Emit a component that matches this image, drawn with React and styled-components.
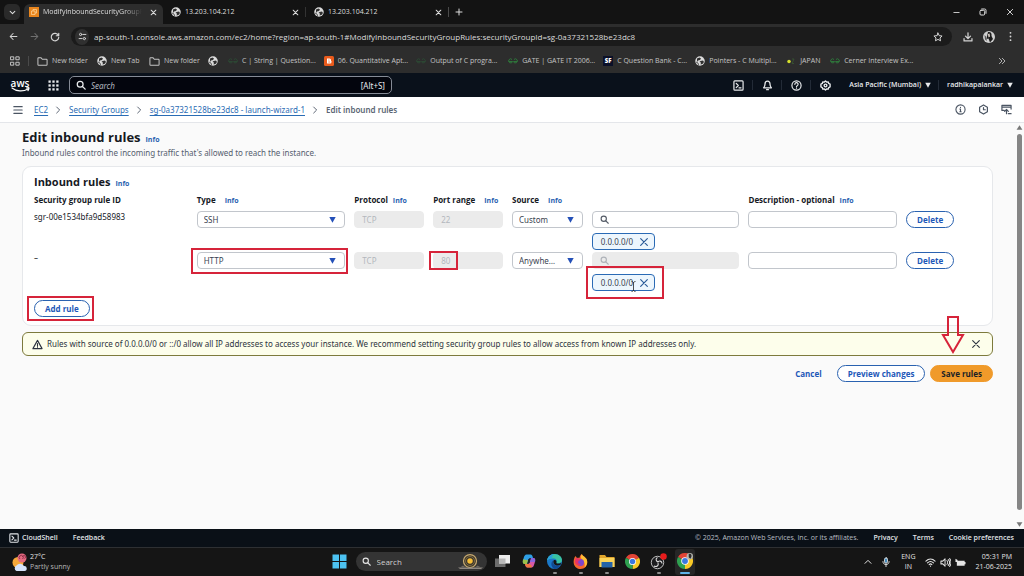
import React from "react";
import styled, { createGlobalStyle, css } from "styled-components";

const ember = `"Noto Sans", "Open Sans", sans-serif`;
const emberBold = `"Open Sans", "Noto Sans", sans-serif`;
const segoe = `"Open Sans", "Noto Sans", sans-serif`;

const c = {
  link: "#1d57b8",
  text: "#16191f",
  muted: "#55606f",
  mark: "#d6243a",
};

const Global = createGlobalStyle`
  *, *::before, *::after { box-sizing: border-box; }
  html, body { margin: 0; padding: 0; }
  body { background: #fafafa; font-family: ${ember}; font-size: 8px; color: ${c.text}; }
  button, input, select { font-family: inherit; margin: 0; }
  svg { display: block; flex: none; }
`;

const Page = styled.div`
  display: flex;
  flex-direction: column;
  min-height: 100vh;
`;

/* ---------- shared ---------- */
const IconButton = styled.button`
  display: flex;
  align-items: center;
  justify-content: center;
  flex: none;
  width: ${(p) => p.$w || 14}px;
  height: 16px;
  padding: 0;
  border: 0;
  background: transparent;
  color: inherit;
  &:disabled { opacity: 0.4; }
`;
const Spacer = styled.div`
  flex: 1;
`;
const Divider = styled.span`
  flex: none;
  width: 1px;
  height: 10px;
  background: ${(p) => p.$color || "#4a4a4a"};
`;

function Icon({ size = 10, sw = 2, children, fill = "none", vb = 24 }) {
  return (
    <svg width={size} height={size} viewBox={`0 0 ${vb} ${vb}`} fill={fill} stroke={fill === "none" ? "currentColor" : "none"} strokeWidth={sw} strokeLinecap="round" strokeLinejoin="round" aria-hidden="true">
      {children}
    </svg>
  );
}
const Cross = ({ size = 9, sw = 2.6 }) => (
  <Icon size={size} sw={sw}><path d="M4 4l16 16M20 4L4 20" /></Icon>
);
const Magnifier = ({ size = 10, sw = 3 }) => (
  <Icon size={size} sw={sw}><circle cx="10" cy="10" r="7" /><path d="M15.5 15.5L22 22" /></Icon>
);
const Caret = ({ size = 7 }) => (
  <Icon size={size} fill="currentColor"><path d="M1 3h22L12 23z" /></Icon>
);
const Terminal = ({ size = 11 }) => (
  <Icon size={size} sw={2.6}><rect x="2" y="2" width="20" height="20" rx="2" /><path d="M7 7.500l4.500 4.500L7 16.500M13 17h4.500" /></Icon>
);
const Globe = () => (
  <svg width="10" height="10" viewBox="0 0 20 20" aria-hidden="true">
    <circle cx="10" cy="10" r="9.500" fill="#dcdcdc" />
    <path d="M4 5l5-2 3 2-2 3-4 1-2 3zM11 10l5-1 2 3-3 4-4 1 1-4-3-1z" fill="#303030" />
    <path d="M2 12l4 2 1 4" stroke="#303030" strokeWidth="1.500" fill="none" />
  </svg>
);
const Folder = () => (
  <Icon size={11} sw={2.2}><path d="M2 5.500A1.500 1.500 0 0 1 3.500 4H9l2.500 3h9A1.500 1.500 0 0 1 22 8.500v10a1.500 1.500 0 0 1-1.500 1.500h-17A1.500 1.500 0 0 1 2 18.500z" /></Icon>
);
const Geeks = ({ dim }) => (
  <svg width="10" height="8" viewBox="0 0 20 12" fill="none" stroke={dim ? "#2c4a34" : "#2f7d3c"} strokeWidth="1.800" aria-hidden="true">
    <path d="M8 3A4 4 0 1 0 9 7H2M12 3a4 4 0 1 1-1 4h7" />
  </svg>
);
const Blogger = () => (
  <svg width="10" height="10" viewBox="0 0 20 20" aria-hidden="true">
    <rect width="20" height="20" rx="3" fill="#ea5b1c" />
    <path d="M6 5h5a3 3 0 0 1 3 3v1.500l1 1V12a3 3 0 0 1-3 3H6z" fill="#fff" />
    <path d="M8.500 8h2.500M8.500 12h4" stroke="#ea5b1c" strokeWidth="1.500" />
  </svg>
);
const Japan = () => (
  <svg width="10" height="10" viewBox="0 0 20 20" aria-hidden="true">
    <circle cx="6" cy="11" r="3.500" fill="#d5e02c" />
    <path d="M12 6h4l-4 9h4" stroke="#3a5a34" strokeWidth="1.500" fill="none" />
  </svg>
);

/* ---------- browser ---------- */
const TabStrip = styled.header`
  display: flex;
  align-items: center;
  height: 24px;
  padding-left: 4px;
  background: #131313;
  color: #dedede;
  font-family: ${segoe};
`;
const TabMenu = styled(IconButton)`
  width: 16px;
  border-radius: 5px;
  background: #2a2a2a;
  margin-right: 4px;
`;
const Tab = styled.div`
  display: flex;
  align-items: center;
  gap: 4px;
  flex: 0 1 ${(p) => (p.$active ? 139 : 142)}px;
  min-width: 0;
  height: ${(p) => (p.$active ? 20 : 16)}px;
  align-self: ${(p) => (p.$active ? "flex-end" : "center")};
  padding: ${(p) => (p.$active ? "0 3px 4px 5px" : "0 3px 0 8px")};
  border-radius: 6px 6px 0 0;
  background: ${(p) => (p.$active ? "#2d2d2d" : "transparent")};
`;
const TabTitle = styled.span`
  flex: 1;
  min-width: 0;
  overflow: hidden;
  white-space: nowrap;
  font-size: 7px;
  line-height: 10px;
  ${(p) => p.$fade && css`mask-image: linear-gradient(90deg, #000 82%, transparent);`}
`;
const WindowControls = styled.div`
  display: flex;
  gap: 13px;
  padding-right: 7px;
`;
const Toolbar = styled.div`
  display: flex;
  align-items: center;
  gap: 7px;
  height: 25px;
  padding: 0 7px 0 6px;
  background: #2d2d2d;
  color: #d4d4d4;
`;
const AddressBar = styled.form`
  display: flex;
  align-items: center;
  gap: 5px;
  flex: 1;
  height: 19px;
  margin: 0 2px;
  padding: 0 7px 0 4px;
  border-radius: 10px;
  background: #1b1b1b;
`;
const SiteInfo = styled(IconButton)`
  border-radius: 50%;
  background: #303030;
`;
const AddressInput = styled.input`
  flex: 1;
  min-width: 0;
  padding: 0;
  border: 0;
  outline: 0;
  background: transparent;
  color: #dcdcdc;
  font-family: ${segoe};
  font-size: 8px;
  line-height: 12px;
`;
const Bookmarks = styled.nav`
  display: flex;
  align-items: center;
  gap: 8px;
  height: 24px;
  padding: 0 15px 0 10px;
  background: #2d2d2d;
  color: #c4c4c4;
  font-family: ${segoe};
`;
const Bookmark = styled.a`
  display: flex;
  align-items: center;
  gap: 4px;
  flex: 0 0 ${(p) => p.$w}px;
  white-space: nowrap;
  color: inherit;
  text-decoration: none;
  font-size: 7px;
  line-height: 10px;
`;
const SfBadge = styled.span`
  flex: none;
  width: 10px;
  background: #0b1028;
  color: #fff;
  font-size: 6px;
  font-weight: 800;
  line-height: 10px;
  text-align: center;
`;

const bookmarks = [
  { icon: <Folder />, label: "New folder", w: 52 },
  { icon: <Globe />, label: "New Tab", w: 44 },
  { icon: <Folder />, label: "New folder", w: 51 },
  { icon: <Globe />, label: "", w: 12 },
  { icon: <Geeks dim />, label: "C | String | Question...", w: 84 },
  { icon: <Blogger />, label: "06. Quantitative Apt...", w: 84 },
  { icon: <Geeks dim />, label: "Output of C progra...", w: 84 },
  { icon: <Geeks />, label: "GATE | GATE IT 2006...", w: 84 },
  { icon: <SfBadge>SF</SfBadge>, label: "C Question Bank - C...", w: 84 },
  { icon: <Globe />, label: "Pointers - C Multipl...", w: 83 },
  { icon: <Japan />, label: "JAPAN", w: 36 },
  { icon: <Geeks />, label: "Cerner Interview Ex...", w: 84 },
];

function Browser() {
  return (
    <>
      <TabStrip>
        <TabMenu aria-label="Search tabs"><Icon size={7} sw={3.5}><path d="M4 8l8 8 8-8" /></Icon></TabMenu>
        <Tab $active>
          <svg width="10" height="10" viewBox="0 0 20 20" aria-hidden="true">
            <rect width="20" height="20" fill="#e8851d" />
            <path d="M5 8h7v7H5zM8 8V5h7v7h-3" stroke="#ffe0b0" strokeWidth="1.300" fill="none" />
          </svg>
          <TabTitle $fade>ModifyInboundSecurityGroupRules</TabTitle>
          <IconButton aria-label="Close tab"><Cross size={7} sw={3.5} /></IconButton>
        </Tab>
        {[1, 2].map((n) => (
          <React.Fragment key={n}>
            {n === 2 && <Divider $color="#333" />}
            <Tab>
              <Globe />
              <TabTitle>13.203.104.212</TabTitle>
              <IconButton aria-label="Close tab"><Cross size={7} sw={3.5} /></IconButton>
            </Tab>
          </React.Fragment>
        ))}
        <Divider />
        <IconButton $w={20} aria-label="New tab"><Icon size={8} sw={3}><path d="M12 3v18M3 12h18" /></Icon></IconButton>
        <Spacer />
        <WindowControls>
          <IconButton aria-label="Minimize"><Icon size={7} sw={3}><path d="M3 12h18" /></Icon></IconButton>
          <IconButton aria-label="Restore"><Icon size={8} sw={3}><rect x="3" y="7" width="14" height="14" rx="3" /><path d="M8 3h9a4 4 0 0 1 4 4v9" /></Icon></IconButton>
          <IconButton aria-label="Close"><Cross size={8} sw={2.8} /></IconButton>
        </WindowControls>
      </TabStrip>
      <Toolbar>
        <IconButton aria-label="Back"><Icon size={9} sw={2.8}><path d="M21 12H4M11 4l-8 8 8 8" /></Icon></IconButton>
        <IconButton aria-label="Forward" disabled><Icon size={9} sw={2.8}><path d="M3 12h17M13 4l8 8-8 8" /></Icon></IconButton>
        <IconButton aria-label="Reload"><Icon size={10} sw={2.8}><path d="M20 8a9 9 0 1 0 1 5M21 3v6h-6" /></Icon></IconButton>
        <AddressBar>
          <SiteInfo type="button" aria-label="Site information"><Icon size={9} sw={2.6}><circle cx="7" cy="6.500" r="3" /><path d="M13 6.500h8M3 17.500h8" /><circle cx="17" cy="17.500" r="3" /></Icon></SiteInfo>
          <AddressInput aria-label="Address" defaultValue="ap-south-1.console.aws.amazon.com/ec2/home?region=ap-south-1#ModifyInboundSecurityGroupRules:securityGroupId=sg-0a37321528be23dc8" />
          <IconButton type="button" aria-label="Bookmark this page"><Icon size={10} sw={2.4}><path d="M12 2.500l2.900 6.300 6.900.8-5.100 4.700 1.400 6.800L12 17.700l-6.100 3.400 1.400-6.800L2.200 9.600l6.900-.8z" /></Icon></IconButton>
        </AddressBar>
        <IconButton aria-label="Downloads"><Icon size={10} sw={3}><path d="M12 2v13M6 10l6 6 6-6M2.500 16v5.500h19V16" /></Icon></IconButton>
        <IconButton aria-label="Profile">
          <svg width="12" height="12" viewBox="0 0 24 24" aria-hidden="true">
            <circle cx="12" cy="12" r="12" fill="#cfcfcf" />
            <path d="M10 2c5-1 8 2 7 8l3 6-6 7-3-8-4 1 1-5z" fill="#1c1c1c" />
            <path d="M3 8l3 3 2 9-4-3z" fill="#5a5a5a" />
            <path d="M10 6l3-1 1 6-3 2z" fill="#e2d8d0" />
          </svg>
        </IconButton>
        <IconButton aria-label="Menu"><Icon size={11} fill="currentColor"><circle cx="12" cy="4" r="2" /><circle cx="12" cy="12" r="2" /><circle cx="12" cy="20" r="2" /></Icon></IconButton>
      </Toolbar>
      <Bookmarks aria-label="Bookmarks">
        <Icon size={10} sw={2.4}><rect x="2" y="2" width="7" height="7" /><rect x="15" y="2" width="7" height="7" /><rect x="2" y="15" width="7" height="7" /><rect x="15" y="15" width="7" height="7" /></Icon>
        <Divider />
        {bookmarks.map((b, i) => (
          <Bookmark key={i} href="#" $w={b.w}>{b.icon}{b.label}</Bookmark>
        ))}
        <Spacer />
        <IconButton aria-label="More bookmarks"><Icon size={8} sw={2.6}><path d="M4 4l8 8-8 8M13 4l8 8-8 8" /></Icon></IconButton>
      </Bookmarks>
    </>
  );
}

/* ---------- AWS header ---------- */
const AwsBar = styled.header`
  display: flex;
  align-items: center;
  height: 24px;
  padding: 0 11px 0 10px;
  background: #0a111b;
  color: #e9ebed;
`;
const Logo = styled.a`
  display: flex;
  flex-direction: column;
  align-items: center;
  width: 20px;
  margin-right: 16px;
  color: #fff;
  font-family: ${emberBold};
  font-size: 10px;
  font-weight: 600;
  line-height: 8px;
  text-decoration: none;
`;
const AwsSearch = styled.label`
  display: flex;
  align-items: center;
  gap: 5px;
  flex: 0 1 323px;
  height: 18px;
  margin-left: 8px;
  padding: 0 6px;
  border: 1px solid #858b96;
  border-radius: 5px;
  background: #03050d;
  font-size: 8px;
`;
const AwsSearchInput = styled.input`
  flex: 1;
  min-width: 0;
  padding: 0;
  border: 0;
  outline: 0;
  background: transparent;
  color: #fff;
  font-size: 8px;
  &::placeholder { color: #b4b9c1; font-style: italic; opacity: 1; }
`;
const Tools = styled.div`
  display: flex;
  align-items: center;
  gap: 7px;
`;
const MenuButton = styled.button`
  display: flex;
  align-items: center;
  gap: 4px;
  padding: 0 ${(p) => p.$pr || 0}px 0 ${(p) => p.$pl || 0}px;
  border: 0;
  background: transparent;
  color: #e9ebed;
  font-family: ${emberBold};
  font-size: 7px;
  font-weight: 600;
  line-height: 12px;
`;

function AwsHeader() {
  const sep = <Divider $color="#232b37" />;
  return (
    <AwsBar>
      <Logo href="#" aria-label="AWS home">
        aws
        <svg width="19" height="5" viewBox="0 0 38 10" fill="none" stroke="#fff" strokeWidth="2.400" strokeLinecap="round" aria-hidden="true">
          <path d="M2 2c9 7 22 8 32 2M31 2c3-1 5-1 5 0s0 3-2 5" />
        </svg>
      </Logo>
      <IconButton $w={15} aria-label="Services">
        <Icon size={11} fill="currentColor">
          {[1, 9.5, 18].map((y) => [1, 9.5, 18].map((x) => <rect key={`${x}-${y}`} x={x} y={y} width="5" height="5" />))}
        </Icon>
      </IconButton>
      <AwsSearch>
        <Magnifier />
        <AwsSearchInput aria-label="Search" placeholder="Search" />
        [Alt+S]
      </AwsSearch>
      <Spacer />
      <Tools>
        <IconButton aria-label="CloudShell"><Terminal /></IconButton>
        {sep}
        <IconButton aria-label="Notifications"><Icon size={11} sw={2.8}><path d="M12 2.500c-4 0-5.500 3-5.500 6.500 0 4-1 5.500-3 8h17c-2-2.500-3-4-3-8 0-3.500-1.500-6.500-5.500-6.500zM10 21h4" /></Icon></IconButton>
        {sep}
        <IconButton aria-label="Help"><Icon size={11} sw={2.6}><circle cx="12" cy="12" r="10" /><path d="M8.500 9.500a3.500 3.500 0 1 1 5 3c-1 .6-1.500 1-1.500 2M12 17.500v.5" /></Icon></IconButton>
        {sep}
        <IconButton aria-label="Settings"><Icon size={11} sw={3}><path d="M12 2l2.500 2.500L18 4l1 3.500 3 1.500v6l-3 1.500L18 20l-3.500-.5L12 22l-2.500-2.500L6 20l-1-3.500L2 15V9l3-1.500L6 4l3.500.5z" /><circle cx="12" cy="12" r="3" /></Icon></IconButton>
        <MenuButton $pl={10}>Asia Pacific (Mumbai)<Caret size={6} /></MenuButton>
        {sep}
        <MenuButton $pl={1}>radhikapalankar<Caret size={6} /></MenuButton>
      </Tools>
    </AwsBar>
  );
}

/* ---------- breadcrumbs ---------- */
const CrumbBar = styled.nav`
  display: flex;
  align-items: center;
  gap: 9px;
  height: 26px;
  padding: 0 11px;
  border-bottom: 1px solid #e4e6ea;
  background: #fff;
  color: #4b5563;
`;
const Crumbs = styled.ol`
  display: flex;
  align-items: center;
  gap: 7px;
  margin: 0;
  padding: 0;
  list-style: none;
  font-size: 8px;
  line-height: 11px;
`;
const Crumb = styled.li`
  display: flex;
  align-items: center;
  gap: 6px;
  color: #5b6573;
  font-weight: ${(p) => (p.$current ? 600 : 400)};
  a { color: #2a6cb4; text-decoration: underline; text-underline-offset: 2px; }
`;

function Breadcrumbs() {
  const path = ["EC2", "Security Groups", "sg-0a37321528be23dc8 - launch-wizard-1"];
  return (
    <CrumbBar aria-label="Breadcrumbs">
      <IconButton aria-label="Open navigation"><Icon size={10} sw={2.8}><path d="M2 4h20M2 12h20M2 20h20" /></Icon></IconButton>
      <Crumbs>
        {path.map((t) => (
          <Crumb key={t}><a href="#">{t}</a><Icon size={8} sw={3}><path d="M8 3l9 9-9 9" /></Icon></Crumb>
        ))}
        <Crumb $current>Edit inbound rules</Crumb>
      </Crumbs>
      <Spacer />
      <IconButton aria-label="Information"><Icon size={11} sw={2.4}><circle cx="12" cy="12" r="10" /><path d="M12 11v6M12 7v.5M10.500 11H12M10.500 17h3" /></Icon></IconButton>
      <IconButton aria-label="Recent activity"><Icon size={11} sw={2.6}><path d="M12 2l8.500 5v10L12 22l-8.500-5V7z" /><path d="M12 8v4.500h4" /></Icon></IconButton>
      <IconButton aria-label="Open shell panel"><Icon size={11} sw={2.6}><path d="M7 14H2V3h20v8M2 7h20M12 21v-9l-4 4M12 12l4 4M16 21h6" /></Icon></IconButton>
    </CrumbBar>
  );
}

/* ---------- main ---------- */
const Body = styled.div`
  display: flex;
  flex: 1;
  background: #fafafa;
`;
const Main = styled.main`
  flex: 1;
  min-width: 0;
  padding: 4px 21px 20px 22px;
`;
const ScrollTrack = styled.div`
  display: flex;
  flex-direction: column;
  align-items: center;
  width: 10px;
  padding: 1px 0;
  color: #777;
`;
const ScrollThumb = styled.div`
  flex: 1;
  width: 5px;
  margin: 3px 0 11px;
  border-radius: 3px;
  background: #858585;
`;
const Heading = styled.div`
  display: flex;
  align-items: baseline;
  gap: ${(p) => p.$gap || 5}px;
`;
const Title = styled.h1`
  margin: 0;
  font-family: ${emberBold};
  font-size: 13px;
  font-weight: 700;
  line-height: 20px;
`;
const CardTitle = styled.h2`
  margin: 0;
  font-family: ${emberBold};
  font-size: 11px;
  font-weight: 700;
  line-height: 16px;
`;
const InfoLink = styled.a`
  color: #2a62b0;
  font-family: ${emberBold};
  font-size: 7px;
  line-height: 10px;
  font-weight: 700;
  text-decoration: none;
`;
const Lead = styled.p`
  margin: 0 0 7px;
  color: ${c.muted};
  font-size: 8px;
  line-height: 12px;
`;
const Card = styled.section`
  padding: 7px 11px 8px 11px;
  margin-bottom: 6px;
  border: 1px solid #e6e8eb;
  border-radius: 9px;
  background: #fff;
`;
const Rules = styled.table`
  width: 100%;
  margin-top: 3px;
  border-collapse: collapse;
  table-layout: fixed;
  th { height: 16px; padding: 0 9px 2px 0; text-align: left; font-family: ${emberBold}; font-size: 8px; line-height: 14px; font-weight: 700; white-space: nowrap; }
  td { height: 41px; padding: 2px 9px 0 0; vertical-align: top; font-size: 8px; line-height: 12px; }
  tbody tr:last-child td { height: 50px; }
  th:last-child, td:last-child { padding-right: 0; }
`;
const box = css`
  display: block;
  width: 100%;
  height: 17px;
  border: 1px solid #c2c6cc;
  border-radius: 4px;
  background: #fff;
  color: #3a4350;
  font-size: 8px;
  line-height: 12px;
  outline: 0;
  opacity: 1;
`;
const TextInput = styled.input`
  ${box}
  padding: 0 7px 0 ${(p) => (p.$icon ? 20 : 7)}px;
  &:disabled { border-color: #ebebeb; background: #ebebeb; color: #b3b7bd; }
`;
const Anchor = styled.div`
  position: relative;
  width: ${(p) => (p.$fit ? "fit-content" : "auto")};
  margin-top: ${(p) => p.$mt || 0}px;
`;
const SelectInput = styled.select`
  ${box}
  appearance: none;
  padding: 0 25px 0 6px;
  text-overflow: ellipsis;
`;
const Inside = styled.span`
  position: absolute;
  top: 0;
  bottom: 0;
  display: flex;
  align-items: center;
  ${(p) => (p.$left ? "left: 8px;" : "right: 9px;")}
  color: ${(p) => p.$color || "#2450b8"};
  pointer-events: none;
`;
const Token = styled.div`
  display: flex;
  align-items: center;
  gap: 6px;
  height: 17px;
  padding: 0 5px 0 8px;
  border: 1px solid #2a6ab5;
  border-radius: 4px;
  background: #edf6fd;
  color: #3a4350;
  font-size: 8px;
`;
const RemoveButton = styled(IconButton)`
  width: 10px;
  color: #2a5a98;
`;
const Highlight = styled.span`
  position: absolute;
  inset: ${(p) => p.$inset};
  border: 2px solid ${c.mark};
  pointer-events: none;
  ${(p) => p.$w && css`width: ${p.$w}px;`}
`;
const Cursor = styled.span`
  position: absolute;
  left: 38px;
  top: 7px;
  color: #222;
`;
const PillButton = styled.button`
  height: 17px;
  padding: 0 10px;
  border: ${(p) => (p.$kind === "link" ? "0" : "1px solid #2a62b0")};
  border-radius: 9px;
  background: #fff;
  color: ${c.link};
  font-family: ${emberBold};
  font-size: 8px;
  font-weight: 700;
  line-height: 12px;
  ${(p) => p.$kind === "link" && "background: transparent;"}
  ${(p) => p.$kind === "primary" && "background: #f09a2a; border-color: #f09a2a; color: #1b1f26;"}
`;
const Warning = styled.div`
  position: relative;
  display: flex;
  align-items: center;
  gap: 4px;
  height: 24px;
  padding: 0 10px 0 9px;
  border: 1px solid #7d7a3c;
  border-radius: 6px;
  background: #fdfeeb;
  color: #2c3340;
  font-size: 8px;
  line-height: 12px;
`;
const Arrow = styled.svg`
  position: absolute;
  right: 27px;
  top: -18px;
`;
const Actions = styled.div`
  display: flex;
  justify-content: flex-end;
  gap: 5px;
  margin-top: 9px;
`;

const columns = [163, 158, 79, 79, 80, 157, 158, 75];
const total = columns.reduce((a, b) => a + b, 0);
const Col = styled.col`
  width: ${(p) => (p.$w / total) * 100}%;
`;

function Select({ label, value }) {
  return (
    <Anchor>
      <SelectInput aria-label={label} defaultValue={value}><option>{value}</option></SelectInput>
      <Inside><Caret size={7} /></Inside>
    </Anchor>
  );
}

function Rule({ id, type, port, source, marked }) {
  return (
    <tr>
      <td>{id}</td>
      <td>
        <Anchor>
          <Select label="Type" value={type} />
          {marked && <Highlight $inset="-4px -3px -5px -6px" />}
        </Anchor>
      </td>
      <td><TextInput aria-label="Protocol" disabled value="TCP" readOnly /></td>
      <td>
        <Anchor>
          <TextInput aria-label="Port range" disabled value={port} readOnly />
          {marked && <Highlight $inset="-1px auto -1px -4px" $w={29} />}
        </Anchor>
      </td>
      <td><Select label="Source" value={source} /></td>
      <td>
        <Anchor>
          <TextInput $icon aria-label="Source address" disabled={marked} />
          <Inside $left $color={marked ? "#aeb2b8" : "#545b66"}><Magnifier size={9} /></Inside>
        </Anchor>
        <Anchor $fit $mt={5}>
          <Token>0.0.0.0/0<RemoveButton aria-label="Remove 0.0.0.0/0"><Cross size={10} sw={2.8} /></RemoveButton></Token>
          {marked && (
            <>
              <Highlight $inset="-8px -9px -8px -6px" />
              <Cursor><svg width="7" height="11" viewBox="0 0 14 22" fill="none" stroke="currentColor" strokeWidth="1.600" aria-hidden="true"><path d="M3 1c2 0 4 1 4 3 0-2 2-3 4-3M7 4v14M3 21c2 0 4-1 4-3 0 2 2 3 4 3" /></svg></Cursor>
            </>
          )}
        </Anchor>
      </td>
      <td><TextInput aria-label="Description" /></td>
      <td><PillButton>Delete</PillButton></td>
    </tr>
  );
}

const Info = () => <InfoLink href="#">Info</InfoLink>;

function Content() {
  return (
    <Body>
      <Main>
        <Heading><Title>Edit inbound rules</Title><Info /></Heading>
        <Lead>Inbound rules control the incoming traffic that's allowed to reach the instance.</Lead>
        <Card>
          <Heading><CardTitle>Inbound rules</CardTitle><Info /></Heading>
          <Rules>
            <colgroup>{columns.map((w, i) => <Col key={i} $w={w} />)}</colgroup>
            <thead>
              <tr>
                <th>Security group rule ID</th>
                <th><Heading $gap={9}>Type<Info /></Heading></th>
                <th><Heading>Protocol<Info /></Heading></th>
                <th><Heading $gap={9}>Port range<Info /></Heading></th>
                <th colSpan={2}><Heading $gap={9}>Source<Info /></Heading></th>
                <th><Heading>Description - optional<Info /></Heading></th>
                <th aria-label="Actions" />
              </tr>
            </thead>
            <tbody>
              <Rule id="sgr-00e1534bfa9d58983" type="SSH" port="22" source="Custom" />
              <Rule id="–" type="HTTP" port="80" source="Anywhere-IPv4" marked />
            </tbody>
          </Rules>
          <Anchor $fit>
            <PillButton>Add rule</PillButton>
            <Highlight $inset="-4px -4px -4px -7px" />
          </Anchor>
        </Card>
        <Warning role="alert">
          <Icon size={11} sw={2.4}><path d="M12 3l10 18H2zM12 10v5M12 17.800v.3" /></Icon>
          Rules with source of 0.0.0.0/0 or ::/0 allow all IP addresses to access your instance. We recommend setting security group rules to allow access from known IP addresses only.
          <Spacer />
          <IconButton $w={12} aria-label="Dismiss"><Cross size={10} sw={2.6} /></IconButton>
          <Arrow width="24" height="39" viewBox="0 0 24 39" fill="none" stroke={c.mark} strokeWidth="2" aria-hidden="true"><path d="M7 2h10v18h5L12 37 2 20h5z" /></Arrow>
        </Warning>
        <Actions>
          <PillButton $kind="link">Cancel</PillButton>
          <PillButton>Preview changes</PillButton>
          <PillButton $kind="primary">Save rules</PillButton>
        </Actions>
      </Main>
      <ScrollTrack aria-hidden="true">
        <Icon size={7} fill="currentColor"><path d="M12 4l10 16H2z" /></Icon>
        <ScrollThumb />
        <Icon size={7} fill="currentColor"><path d="M12 20l10-16H2z" /></Icon>
      </ScrollTrack>
    </Body>
  );
}

/* ---------- footer ---------- */
const FooterBar = styled.footer`
  display: flex;
  align-items: center;
  gap: 15px;
  height: 18px;
  padding: 0 10px 0 9px;
  background: #0a1017;
  color: #b8bcc2;
  font-family: ${emberBold};
  font-size: 7px;
  line-height: 12px;
  a { display: flex; align-items: center; gap: 3px; color: #e1e4e8; font-weight: 600; text-decoration: none; }
`;

/* ---------- taskbar ---------- */
const Taskbar = styled.footer`
  display: grid;
  grid-template-columns: 1fr auto 1fr;
  align-items: center;
  height: 29px;
  padding: 0 12px;
  border-top: 1px solid #2e3033;
  background: #151515;
  color: #e4e4e4;
  font-family: ${segoe};
  font-size: 7px;
  line-height: 10px;
`;
const Weather = styled.div`
  display: flex;
  align-items: center;
  gap: 3px;
  span { color: #b8b8b8; }
`;
const Apps = styled.div`
  display: flex;
  align-items: center;
  gap: 6px;
`;
const TaskButton = styled.button`
  position: relative;
  display: flex;
  align-items: center;
  justify-content: center;
  width: 20px;
  height: 26px;
  padding: 0 0 2px;
  border: 0;
  border-radius: 3px;
  background: ${(p) => (p.$state === "active" ? "#262626" : "transparent")};
  &::after {
    content: "";
    position: absolute;
    bottom: 1px;
    left: calc(50% - ${(p) => (p.$state === "active" ? 5 : 2)}px);
    width: ${(p) => (p.$state === "active" ? 10 : 4)}px;
    height: 2px;
    border-radius: 1px;
    background: ${(p) => (p.$state === "active" ? "#5fb4ea" : p.$state === "open" ? "#8c8c8c" : "transparent")};
  }
`;
const TaskSearch = styled.label`
  display: flex;
  align-items: center;
  gap: 6px;
  width: 131px;
  height: 19px;
  margin-bottom: 2px;
  padding: 0 4px 0 6px;
  border-radius: 10px;
  background: #343434;
`;
const TaskSearchInput = styled.input`
  flex: 1;
  min-width: 0;
  padding: 0;
  border: 0;
  background: transparent;
  font-size: 8px;
  &::placeholder { color: #d0d0d0; opacity: 1; }
`;
const Tray = styled.div`
  display: flex;
  align-items: center;
  justify-content: flex-end;
  gap: 4px;
`;
const TrayText = styled.div`
  text-align: ${(p) => p.$align};
  margin: 0 ${(p) => p.$mr || 0}px 0 ${(p) => p.$ml || 0}px;
  white-space: nowrap;
`;

const ChromeLogo = ({ size = 15, badge }) => (
  <svg width={size} height={size} viewBox="0 0 30 30" aria-hidden="true">
    <path d="M15 15L2 7.500A15 15 0 0 1 28 7.500z" fill="#e24436" />
    <path d="M15 15L28 7.500A15 15 0 0 1 15 30z" fill="#f9c926" />
    <path d="M15 15V30A15 15 0 0 1 2 7.500z" fill="#2fa150" />
    <circle cx="15" cy="15" r="7" fill="#fff" />
    <circle cx="15" cy="15" r="5.500" fill="#3b78e0" />
    {badge && <g><circle cx="24" cy="6" r="6" fill="#b5b5b0" /><path d="M22 2c4-2 6 2 5 5l-2 4-3-3z" fill="#2b2b2b" /></g>}
  </svg>
);

function WindowsTaskbar() {
  return (
    <Taskbar>
      <Weather>
        <svg width="15" height="19" viewBox="0 0 30 38" aria-hidden="true">
          <circle cx="12" cy="19" r="11" fill="#f5a83a" />
          <circle cx="20" cy="10" r="9" fill="#e56a80" />
          <path d="M16 12a4 4 0 1 1 5 0M21 8a3 3 0 1 1 4 3" stroke="#8f2f48" strokeWidth="2" fill="none" />
          <path d="M9 36a6 6 0 0 1 0-11 9 9 0 0 1 15 1 5 5 0 0 1 1 10z" fill="#d5e3fb" />
        </svg>
        <div>27°C<br /><span>Partly sunny</span></div>
      </Weather>
      <Apps>
        <TaskButton aria-label="Start"><svg width="15" height="15" viewBox="0 0 30 30" fill="#4cc2f1" aria-hidden="true"><path d="M1 1h13v13H1zM16 1h13v13H16zM1 16h13v13H1zM16 16h13v13H16z" /></svg></TaskButton>
        <TaskSearch>
          <Magnifier size={9} />
          <TaskSearchInput aria-label="Search Windows" placeholder="Search" />
          <svg width="25" height="17" viewBox="0 0 50 34" aria-hidden="true">
            <circle cx="24" cy="16" r="13" fill="#3a352b" stroke="#c9ab70" strokeWidth="2.500" />
            <circle cx="24" cy="16" r="9" fill="none" stroke="#917b4e" strokeWidth="1.500" />
            <circle cx="24" cy="16" r="5.500" fill="#f6bd35" />
            <path d="M0 29h50l-4 3H4z" fill="#8e8780" />
            <path d="M4 29l6-4 6 4zM34 29l5-4 7 4z" fill="#6c6760" />
          </svg>
        </TaskSearch>
        <TaskButton aria-label="Task view"><svg width="15" height="14" viewBox="0 0 30 28" aria-hidden="true"><rect x="0" y="9" width="21" height="17" fill="#6c6c6c" /><rect x="8" y="2" width="22" height="17" fill="#ededed" /><rect x="8" y="9" width="13" height="10" fill="#b9b9b9" /></svg></TaskButton>
        <TaskButton aria-label="Copilot">
          <svg width="14" height="14" viewBox="0 0 28 28" aria-hidden="true">
            <path d="M9 1h8c3 0 4 3 5 7h-5c-3 0-4 2-5 6l-2 6H6c-5 0-5-5-3-11S6 1 9 1z" fill="#2e9fe6" />
            <path d="M2 11c2 0 8 0 10 2l-2 7H6c-5 0-5-4-4-9z" fill="#9cc04a" />
            <path d="M19 27h-8c-3 0-4-3-5-7h5c3 0 4-2 5-6l2-6h4c5 0 5 5 3 11s-3 8-6 8z" fill="#d659a9" />
            <path d="M19 27h-8c-3 0-4-3-5-7h6c4 0 9 2 7 7z" fill="#f0763f" />
            <path d="M18 8h4c5 0 5 4 4 8H15z" fill="#8b65dc" />
            <path d="M13 10h4l-2 8h-4z" fill="#17202c" />
          </svg>
        </TaskButton>
        <TaskButton $state="open" aria-label="Edge">
          <svg width="15" height="15" viewBox="0 0 30 30" aria-hidden="true">
            <circle cx="15" cy="15" r="15" fill="#1a78c9" />
            <path d="M0 14C1 5 8 0 15 0c9 0 15 6 15 12 0 5-4 7-8 7-3 0-4-1-3-3 2-4-2-7-6-7C7 9 1 10 0 14z" fill="#39c2a3" />
            <path d="M0 14C1 5 8 0 15 0c-4 2-6 5-4 9C6 9 1 10 0 14z" fill="#2b9fdb" />
            <path d="M12 13c-2 8 5 12 15 10-3 5-8 7-12 7-6-3-9-12-3-17z" fill="#124a93" />
            <path d="M13 13c4-2 6 0 6 3-1 2 0 3 3 3 2 0 4 0 6-2l-1 5c-8 3-16-1-14-9z" fill="#151515" />
          </svg>
        </TaskButton>
        <TaskButton $state="open" aria-label="Firefox">
          <svg width="15" height="15" viewBox="0 0 30 30" aria-hidden="true">
            <path d="M3 7l2-3 3 4c2-1 4-1 5 0 0-3 2-6 5-8 0 4 6 5 9 10 4 8 0 20-12 20C4 30-2 19 3 7z" fill="#f5652c" />
            <path d="M18 0c0 4 6 5 9 10 3 7 1 13-4 17 2-8-1-13-5-16-3-3-3-8 0-11z" fill="#fdbf36" />
            <circle cx="15" cy="17" r="7" fill="#7c45cf" />
            <path d="M5 9c4-2 9 0 10 3l-4 2c-2 3 0 7 5 6-4 5-12 2-12-5z" fill="#e93366" />
          </svg>
        </TaskButton>
        <TaskButton $state="open" aria-label="File Explorer">
          <svg width="16" height="15" viewBox="0 0 32 30" aria-hidden="true">
            <path d="M1 2h11l3 4h16v20H1z" fill="#e0a52c" />
            <path d="M1 8h30v18H1z" fill="#fbd45a" />
            <path d="M5 16h22v11H5z" fill="#2563a8" />
          </svg>
        </TaskButton>
        <TaskButton aria-label="Chrome"><ChromeLogo /></TaskButton>
        <TaskButton $state="open" aria-label="OBS Studio">
          <svg width="17" height="17" viewBox="0 0 34 34" aria-hidden="true">
            <circle cx="15" cy="19" r="12.500" fill="#1c1c1e" stroke="#bdbdbd" strokeWidth="2" />
            <path d="M17 18c-6-1-6-7-2-9M15 19c3-5 9-3 9 2M16 20c2 5-3 9-8 6" stroke="#d8d8d8" strokeWidth="2.200" fill="none" />
            <circle cx="27" cy="7" r="6.500" fill="#e81c1c" />
          </svg>
        </TaskButton>
        <TaskButton $state="active" aria-label="Chrome window"><ChromeLogo size={16} badge /></TaskButton>
      </Apps>
      <Tray>
        <IconButton aria-label="Show hidden icons"><Icon size={8} sw={3}><path d="M3 16l9-9 9 9" /></Icon></IconButton>
        <IconButton aria-label="Microphone"><Icon size={10} sw={2.2}><rect x="8.500" y="2" width="7" height="13" rx="3.500" fill="#3f86b8" /><path d="M4.500 11c0 10 15 10 15 0M12 19v4" /></Icon></IconButton>
        <TrayText $align="center" $ml={4} $mr={6}>ENG<br />IN</TrayText>
        <Icon size={11} sw={2.4}><path d="M2 9c6-6 14-6 20 0M5.500 13c4-4 9-4 13 0M9 16.500c2-2 4-2 6 0M12 20v.2" /></Icon>
        <Icon size={11} sw={2.2}><path d="M2 9v6h4l5 5V4L6 9zM15 8c2 2 2 6 0 8M18 5.500c4 4 4 9 0 13M21 3.500c4 5 4 12 0 17" /></Icon>
        <Icon size={11} fill="currentColor"><path d="M1 4l4 2 1 2h15v3h2v5h-2v3H4v-8H1z" /></Icon>
        <TrayText $align="right" $ml={5}>05:31 PM<br />21-06-2025</TrayText>
      </Tray>
    </Taskbar>
  );
}

export default function App() {
  return (
    <Page>
      <Global />
      <Browser />
      <AwsHeader />
      <Breadcrumbs />
      <Content />
      <FooterBar>
        <a href="#"><Terminal size={10} />CloudShell</a>
        <a href="#">Feedback</a>
        <Spacer />
        <span>© 2025, Amazon Web Services, Inc. or its affiliates.</span>
        <a href="#">Privacy</a>
        <a href="#">Terms</a>
        <a href="#">Cookie preferences</a>
      </FooterBar>
      <WindowsTaskbar />
    </Page>
  );
}
